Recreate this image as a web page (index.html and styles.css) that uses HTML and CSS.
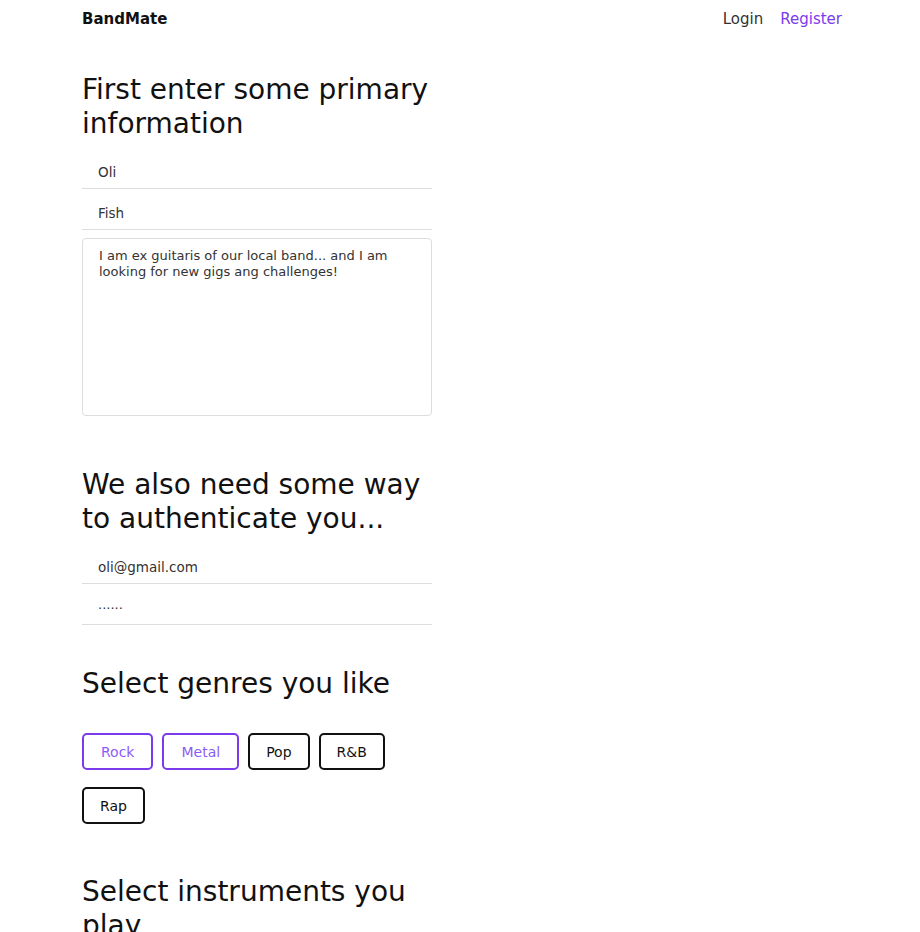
FILE: index.html
```html
<!DOCTYPE html>
<html>
<head>
<meta charset="utf-8">
<link rel="stylesheet" href="styles.css">
</head>
<body>
<header class="topbar">
  <div class="brand">BandMate</div>
  <nav class="nav">
    <a class="nav-link">Login</a>
    <a class="nav-link nav-link-active">Register</a>
  </nav>
</header>
<main class="form-col">
  <section class="section section-first">
    <h2 class="heading">First enter some primary information</h2>
    <div class="field">Oli</div>
    <div class="field">Fish</div>
    <div class="textarea">I am ex guitaris of our local band... and I am looking for new gigs ang challenges!</div>
  </section>
  <section class="section">
    <h2 class="heading">We also need some way to authenticate you...</h2>
    <div class="field">oli@gmail.com</div>
    <div class="field field-pass">&middot;&middot;&middot;&middot;&middot;&middot;</div>
  </section>
  <section class="section section-chips">
    <h2 class="heading">Select genres you like</h2>
    <div class="chips">
      <span class="chip chip-on">Rock</span>
      <span class="chip chip-on">Metal</span>
      <span class="chip">Pop</span>
      <span class="chip">R&amp;B</span>
      <span class="chip">Rap</span>
    </div>
  </section>
  <section class="section">
    <h2 class="heading">Select instruments you play</h2>
  </section>
</main>
</body>
</html>
```
FILE: styles.css
```css
body { margin: 0; font-family: "DejaVu Sans", sans-serif; color: #111; background: #fff; }
.topbar { width: 760px; margin: 0 auto; padding: 1px 0 0 4px; height: 35px; display: flex; align-items: center; justify-content: space-between; }
.brand { font-weight: 600; font-size: 15px; color: #111; }
.nav { display: flex; gap: 17px; font-size: 15px; }
.nav-link { color: #333; }
.nav-link-active { color: #7c3aed; }
.form-col { width: 760px; margin: 0 auto; padding-left: 4px; }
.section { width: 350px; }
.section-first { padding-bottom: 10px; }
.section-chips { padding-bottom: 9px; }
.heading { font-weight: 400; font-size: 28px; line-height: 34px; margin: 42px 0 7px; color: #111; }
.section-first .heading { margin-top: 37px; }
.field { box-sizing: border-box; height: 41px; border-bottom: 1px solid #ddd; padding: 0 16px 8px; font-size: 13.5px; display: flex; align-items: flex-end; color: #333; }
.field-pass { font-size: 13px; }
.textarea { margin-top: 8px; height: 160px; border: 1px solid #ddd; border-radius: 4px; padding: 9px 16px 7px; font-size: 13px; line-height: 16px; color: #333; }
.chips { display: flex; flex-wrap: wrap; gap: 17px 9px; margin-top: 32px; }
.chip { border: 2px solid #111; border-radius: 5px; height: 37px; box-sizing: border-box; padding: 0 16px; display: flex; align-items: center; font-size: 14px; color: #111; }
.chip-on { border-color: #7c3aed; color: #8b5cf6; padding: 0 17px; }
```
